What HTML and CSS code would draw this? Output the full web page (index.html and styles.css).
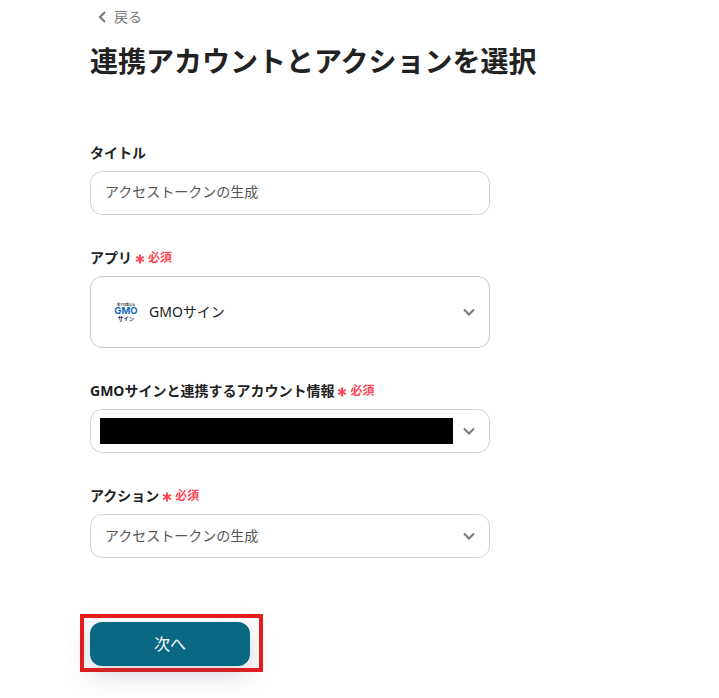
FILE: index.html
```html
<!DOCTYPE html>
<html lang="ja">
<head>
    <meta charset="UTF-8">
    <meta name="viewport" content="width=device-width, initial-scale=1.0">
    <title>連携アカウントとアクションを選択</title>
    <link rel="stylesheet" href="styles.css">
</head>
<body>

    <main class="page">
        <a class="back-link" href="#">
            <svg class="back-icon" viewBox="0 0 8 12" aria-hidden="true">
                <path d="M7 1L2 6l5 5"/>
            </svg>
            戻る
        </a>
        <h1 class="page-title">連携アカウントとアクションを選択</h1>

        <form class="form">
            <div class="field">
                <label class="field-label" for="title">タイトル</label>
                <input class="control" type="text" id="title" value="アクセストークンの生成">
            </div>

            <div class="field">
                <label class="field-label" for="app">アプリ
                    <span class="required">
                        <svg class="required-icon" viewBox="0 0 10 10" aria-hidden="true"><path d="M5 .5v9M1.1 2.75l7.8 4.5M8.9 2.75l-7.8 4.5"/></svg>必須
                    </span>
                </label>
                <div class="select-box">
                    <select class="control control-app" id="app">
                        <option>GMOサイン</option>
                    </select>
                    <svg class="app-logo" viewBox="0 0 104 88" aria-hidden="true">
                        <text class="logo-small" x="52" y="18">電子印鑑なら</text>
                        <text class="logo-name" x="52" y="52">GMO</text>
                        <text class="logo-sub" x="52" y="79">サイン</text>
                    </svg>
                    <svg class="chevron" viewBox="0 0 12 8" aria-hidden="true"><path d="M1 1.5l5 5 5-5"/></svg>
                </div>
            </div>

            <div class="field">
                <label class="field-label" for="account">GMOサインと連携するアカウント情報
                    <span class="required">
                        <svg class="required-icon" viewBox="0 0 10 10" aria-hidden="true"><path d="M5 .5v9M1.1 2.75l7.8 4.5M8.9 2.75l-7.8 4.5"/></svg>必須
                    </span>
                </label>
                <div class="select-box">
                    <select class="control" id="account">
                        <option></option>
                    </select>
                    <span class="mask"></span>
                    <svg class="chevron" viewBox="0 0 12 8" aria-hidden="true"><path d="M1 1.5l5 5 5-5"/></svg>
                </div>
            </div>

            <div class="field">
                <label class="field-label" for="action">アクション
                    <span class="required">
                        <svg class="required-icon" viewBox="0 0 10 10" aria-hidden="true"><path d="M5 .5v9M1.1 2.75l7.8 4.5M8.9 2.75l-7.8 4.5"/></svg>必須
                    </span>
                </label>
                <div class="select-box">
                    <select class="control" id="action">
                        <option>アクセストークンの生成</option>
                    </select>
                    <svg class="chevron" viewBox="0 0 12 8" aria-hidden="true"><path d="M1 1.5l5 5 5-5"/></svg>
                </div>
            </div>

            <div class="highlight">
                <button class="next-button" type="button">次へ</button>
            </div>
        </form>
    </main>

</body>
</html>
```

FILE: styles.css
```css
* {
    box-sizing: border-box;
}
body {
    margin: 0;
    background-color: #fff;
    color: #222;
    font-family: "Noto Sans", "Noto Sans CJK JP", sans-serif;
    font-size: 14px;
    line-height: 21px;
}
.page {
    padding: 6px 24px 24px 90px;
}
.back-link {
    display: flex;
    align-items: center;
    gap: 8px;
    width: fit-content;
    padding-left: 8px;
    color: #777;
    text-decoration: none;
}
.back-icon {
    width: 8px;
    height: 12px;
    fill: none;
    stroke: #777;
    stroke-width: 2;
}
.page-title {
    margin: 13px 0 60px;
    font-size: 28px;
    line-height: 42px;
    font-weight: bold;
}
.form {
    display: flex;
    flex-direction: column;
    gap: 32px;
    max-width: 400px;
}
.field {
    display: flex;
    flex-direction: column;
    gap: 8px;
}
.field-label {
    display: flex;
    align-items: center;
    gap: 3px;
    font-weight: bold;
}
.required {
    display: flex;
    align-items: center;
    gap: 3px;
    color: #ff4757;
    font-size: 12px;
}
.required-icon {
    width: 10px;
    height: 10px;
    margin-top: 3px;
    fill: none;
    stroke: #ff4757;
    stroke-width: 2;
}
.control {
    width: 100%;
    height: 44px;
    padding: 0 14px 4px;
    border: 1px solid #cdd2dc;
    border-radius: 12px;
    background-color: #fff;
    color: #555;
    font: inherit;
    appearance: none;
}
select.control {
    padding-bottom: 1px;
}
.control-app {
    height: 72px;
    padding-left: 58px;
    border-color: #c8c8c8;
    color: #222;
}
/* select with the icons laid over it */
.select-box {
    display: grid;
    align-items: center;
}
.select-box > * {
    grid-area: 1 / 1;
}
.chevron {
    justify-self: end;
    width: 12px;
    height: 8px;
    margin-right: 15px;
    fill: none;
    stroke: #777;
    stroke-width: 2;
    pointer-events: none;
}
.app-logo {
    width: 26px;
    height: 22px;
    margin-left: 23px;
    text-anchor: middle;
    font-weight: bold;
    pointer-events: none;
}
.logo-small {
    font-size: 12px;
    fill: #333a4a;
}
.logo-name {
    font-family: Inter, sans-serif;
    font-size: 38px;
    fill: #0f6ab8;
}
.logo-sub {
    font-size: 22px;
    fill: #1d2a44;
}
.mask {
    height: 26px;
    margin: 0 37px 0 10px;
    background-color: #000;
}
/* red frame around the next button */
.highlight {
    width: fit-content;
    margin: 24px 0 0 -10px;
    padding: 4px 9px 2px 6px;
    border: 4px solid #e81c1c;
}
.next-button {
    display: block;
    width: 160px;
    height: 44px;
    border: none;
    border-radius: 12px;
    background-color: #0a6882;
    box-shadow: 0 8px 24px rgba(70, 85, 110, 0.25);
    color: #fff;
    font: inherit;
    font-size: 16px;
    cursor: pointer;
}
```
